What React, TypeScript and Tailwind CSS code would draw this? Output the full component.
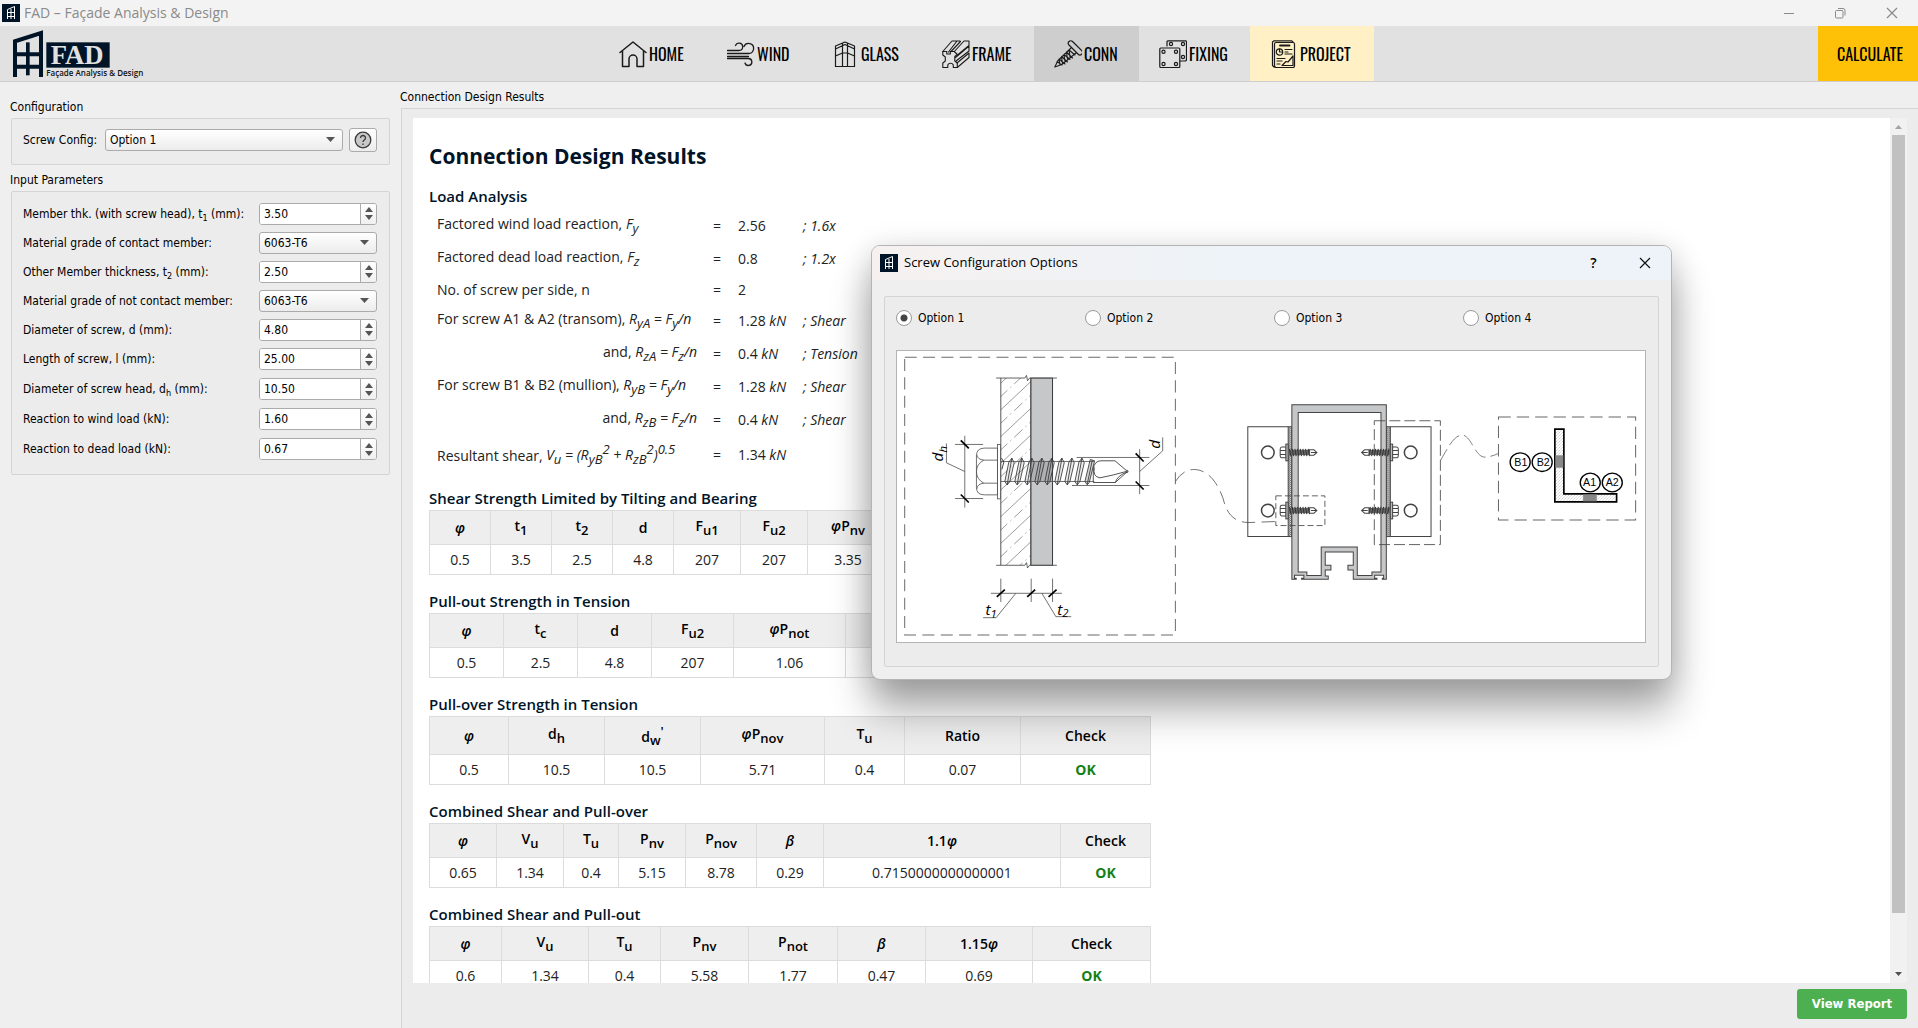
import { useState, type ReactNode } from 'react';
import clsx from 'clsx';

const OPTIONS = ['Option 1', 'Option 2', 'Option 3', 'Option 4'];

type Field = { id: string; label: ReactNode; value: string; kind: 'spin' | 'select' };

const FIELDS: Field[] = [
  { id: 't1', label: <>Member thk. (with screw head), t<Small>1</Small> (mm):</>, value: '3.50', kind: 'spin' },
  { id: 'grade1', label: 'Material grade of contact member:', value: '6063-T6', kind: 'select' },
  { id: 't2', label: <>Other Member thickness, t<Small>2</Small> (mm):</>, value: '2.50', kind: 'spin' },
  { id: 'grade2', label: 'Material grade of not contact member:', value: '6063-T6', kind: 'select' },
  { id: 'd', label: 'Diameter of screw, d (mm):', value: '4.80', kind: 'spin' },
  { id: 'l', label: 'Length of screw, l (mm):', value: '25.00', kind: 'spin' },
  { id: 'dh', label: <>Diameter of screw head, d<Small>h</Small> (mm):</>, value: '10.50', kind: 'spin' },
  { id: 'wind', label: 'Reaction to wind load (kN):', value: '1.60', kind: 'spin' },
  { id: 'dead', label: 'Reaction to dead load (kN):', value: '0.67', kind: 'spin' },
];

function Small({ children }: { children: ReactNode }) {
  return <sub className="static align-sub text-[9px]">{children}</sub>;
}

function Sub({ children }: { children: ReactNode }) {
  return <sub className="static align-sub text-[13px] leading-5">{children}</sub>;
}

function Sup({ children }: { children: ReactNode }) {
  return <sup className="static align-super text-[13px] leading-5">{children}</sup>;
}

function AppIcon() {
  return (
    <svg width="18" height="18" viewBox="0 0 18 18" aria-hidden="true">
      <rect width="18" height="18" fill="#001428" />
      <path d="M5.500 15V5.500l7-3V15M5.500 8.500h7M5.500 12.500h7M9 5v10" fill="none" stroke="#fff" strokeWidth="1" />
    </svg>
  );
}

function Logo() {
  return (
    <svg width="145" height="55" viewBox="0 78 435 165" role="img" aria-label="FAD Façade Analysis & Design">
      <path d="M45 231V124L123 99V231M45 163H123M45 200H123" fill="none" stroke="#001428" strokeWidth="12" />
      <path d="M78 127H89V226H78Z" fill="#001428" />
      <rect x="139" y="127" width="190" height="76" fill="#001428" />
      <text x="152" y="192" fontSize="80" fontWeight="700" fill="#e1e1e1" className="font-['Liberation_Serif',serif]">FAD</text>
      <text x="139" y="227" fontSize="24" fontWeight="600" fill="#111" className="font-['Open_Sans',sans-serif]">Façade Analysis &amp; Design</text>
    </svg>
  );
}

/* ---------- toolbar icons ---------- */

function NavIcon({ children }: { children: ReactNode }) {
  return (
    <svg width="28" height="28" viewBox="0 0 28 28" fill="none" stroke="#1a1a1a" strokeWidth="1.200" strokeLinejoin="round" strokeLinecap="round" aria-hidden="true" className="shrink-0">
      {children}
    </svg>
  );
}

const HomeIcon = () => (
  <NavIcon>
    <path strokeWidth="1.500" d="M1 12.500L14 2l13 10.500M3.500 11v15.500H10V19a4 4 0 018 0v7.500h6.500V11" />
  </NavIcon>
);

const WindIcon = () => (
  <NavIcon>
    <path strokeWidth="1.300" d="M.500 10.500h11.500a3.700 3.700 0 10-3.500-5M.500 13.500h21a5 5 0 10-4.500-7M.500 16.500h21M.500 18.500h21a3.500 3.500 0 11-3.500 4.500" />
  </NavIcon>
);

const GlassIcon = () => (
  <NavIcon>
    <path d="M4.500 6L14 2l9.500 4v20.500h-19zM11.500 3v23.500M16.500 3v23.500M4.500 9L14 4.500 23.500 9M4.500 16l7-3h5l7 3" />
  </NavIcon>
);

const FrameIcon = () => (
  <NavIcon>
    <path strokeWidth="1.100" d="M.800 11.500h4v2.500h3.500v-2.500h4l3 3-2.500 2v4.500l2.500 2v4.500h-4v-2.500a3 3 0 00-5.500 0v2.500h-5v-4.500l2.500-2v-4l-2.500-2z" />
    <path strokeWidth="1.100" d="M.800 11.500L10 1h5l-8.500 11M18 1h-3M12.300 11.500L22 1h5v4.500L15.500 15M8.500 12L18.500 1.500M13.500 17.500L27 6v5l-13 10M15 23l12-10v4.500L15.300 27.500" />
  </NavIcon>
);

const ScrewIcon = () => (
  <NavIcon>
    <rect x="12.500" y="5" width="18" height="5" rx="2.500" transform="rotate(45 21 7.500)" />
    <path strokeWidth="1.100" d="M17 8L4 20.500.800 27l7-2.500L22 13M15 10l6 5M12.500 12l6 6M10 14.500l6 5M7.500 16.500l6 5.500M5 19l6 5M3 21.500l5 3.500M15 10l1 7M12.500 12l1 7M10 14.500l1 7M7.500 17l1 6.500M5 19l1 6" />
  </NavIcon>
);

const FixingIcon = () => (
  <NavIcon>
    <path d="M8 6V1.500L9 .800h18l.500 1V20l-1 1H21" />
    <rect x=".800" y="8" width="20" height="19.500" rx="1" />
    <g>
      <circle cx="4.500" cy="11.800" r="1.600" /><circle cx="17" cy="11.800" r="1.600" />
      <circle cx="4.500" cy="24" r="1.600" /><circle cx="17" cy="24" r="1.600" />
      <circle cx="12" cy="4" r="1.600" /><circle cx="24" cy="4" r="1.600" /><circle cx="24" cy="17" r="1.600" />
    </g>
  </NavIcon>
);

const ProjectIcon = () => (
  <NavIcon>
    <path d="M5.500 27H4L2.500 25.500V2L4 .800h17.500L23 2" />
    <rect x="4.500" y="2.500" width="20" height="25" rx="1.500" />
    <path strokeWidth="1.800" d="M10 5.500h9.500" />
    <circle cx="9.500" cy="12" r="3.200" />
    <path d="M9.500 9v3h3M15 9.500h7M15 12h3M15 14h7M7 18.500h8M7 21h5M7 24h3M12 25.500l4-4 2 .500 5-6v9.500z" />
  </NavIcon>
);

const NAV = [
  { name: 'HOME', icon: HomeIcon, style: 'w-[108px]' },
  { name: 'WIND', icon: WindIcon, style: 'w-[104px]' },
  { name: 'GLASS', icon: GlassIcon, style: 'w-[111px]' },
  { name: 'FRAME', icon: FrameIcon, style: 'w-[112px]' },
  { name: 'CONN', icon: ScrewIcon, style: 'w-[105px] bg-[#cecece]' },
  { name: 'FIXING', icon: FixingIcon, style: 'w-[111px]' },
  { name: 'PROJECT', icon: ProjectIcon, style: 'w-[124px] bg-[#fff0c5]' },
];

const navFont = "font-['Oswald','Roboto_Condensed','Liberation_Sans_Narrow',sans-serif] text-base font-normal text-black";

function TitleBar() {
  return (
    <div className="flex h-[26px] shrink-0 items-center bg-[#f3f3f3] pl-0.5">
      <AppIcon />
      <span className="ml-1 font-['Open_Sans',sans-serif] text-sm text-[#8a8a8a]">FAD – Façade Analysis &amp; Design</span>
      <div className="ml-auto flex items-center">
        <button aria-label="Minimize" className="flex h-6 w-[51px] items-center justify-center">
          <svg width="12" height="12" viewBox="0 0 12 12" stroke="#8a8a8a"><path d="M1 6.500h10" /></svg>
        </button>
        <button aria-label="Restore" className="flex h-6 w-[51px] items-center justify-center">
          <svg width="12" height="12" viewBox="0 0 12 12" fill="none" stroke="#8a8a8a"><rect x="1.500" y="3.500" width="7.500" height="7.500" rx="1" /><path d="M4 1.500h5q2 0 2 2v5" /></svg>
        </button>
        <button aria-label="Close" className="flex h-6 w-[53px] items-center justify-center">
          <svg width="12" height="12" viewBox="0 0 12 12" stroke="#8a8a8a" strokeWidth="1.200"><path d="M1 1l10 10M11 1L1 11" /></svg>
        </button>
      </div>
    </div>
  );
}

function Toolbar() {
  return (
    <header className="flex h-14 shrink-0 border-b border-[#cdcdcd] bg-[#e1e1e1]">
      <div className="w-[155px] shrink-0"><Logo /></div>
      <nav className="flex flex-1 justify-center">
        {NAV.map(({ name, icon: Icon, style }) => (
          <button key={name} className={clsx('flex items-center gap-0.5 pl-5', navFont, style)}>
            <Icon />
            {name}
          </button>
        ))}
      </nav>
      <button className={clsx('w-[100px] bg-[#ffc107] pl-1', navFont)}>CALCULATE</button>
    </header>
  );
}

/* ---------- sidebar ---------- */

const controlBorder = 'rounded-[3px] border border-[#ababab]';

function SelectBox({ id, options, value, onChange }: { id: string; options: string[]; value: string; onChange?: (v: string) => void }) {
  return (
    <div className="relative w-full">
      <select
        id={id}
        value={value}
        onChange={(e) => onChange?.(e.target.value)}
        className={clsx('block h-[22px] w-full appearance-none bg-linear-to-b from-white to-[#ececec] pl-1', controlBorder)}
      >
        {options.map((o) => <option key={o}>{o}</option>)}
      </select>
      <svg width="9" height="6" viewBox="0 0 9 6" className="pointer-events-none absolute top-2 right-2" aria-hidden="true">
        <path d="M0 0h9L4.500 5z" fill="#555" />
      </svg>
    </div>
  );
}

function SpinBox({ id, initial }: { id: string; initial: string }) {
  const [value, setValue] = useState(initial);
  const step = (by: number) => setValue((Number(value) + by).toFixed(2));
  return (
    <div className={clsx('flex h-[22px] w-full overflow-hidden bg-white', controlBorder)}>
      <input id={id} value={value} onChange={(e) => setValue(e.target.value)} className="min-w-0 flex-1 bg-white pl-1 outline-none" />
      <div className="flex w-4 flex-col border-l border-[#ababab] bg-linear-to-b from-white to-[#f0f0f0]">
        <button aria-label="Increase" onClick={() => step(0.1)} className="flex flex-1 items-end justify-center pb-px">
          <svg width="8" height="5" viewBox="0 0 8 5"><path d="M0 5h8L4 0z" fill="#555" /></svg>
        </button>
        <button aria-label="Decrease" onClick={() => step(-0.1)} className="flex flex-1 items-start justify-center pt-0.5">
          <svg width="8" height="5" viewBox="0 0 8 5"><path d="M0 0h8L4 5z" fill="#555" /></svg>
        </button>
      </div>
    </div>
  );
}

function Sidebar({ option, setOption }: { option: string; setOption: (v: string) => void }) {
  return (
    <aside className="w-[400px] shrink-0 pt-[15px] pr-[10px] pl-[11px]">
      <h2 className="-ml-px h-[21px] leading-5">Configuration</h2>
      <div className="flex h-[47px] items-start rounded-[2px] border border-[#d4d4d4] bg-[#ececec] pt-[9px] pr-3 pl-[11px]">
        <label htmlFor="config" className="w-[82px] leading-6">Screw Config:</label>
        <div className="flex-1 pt-px"><SelectBox id="config" options={OPTIONS} value={option} onChange={setOption} /></div>
        <button aria-label="Help" className={clsx('ml-1.5 flex h-6 w-7 items-center justify-center bg-linear-to-b from-white to-[#ececec]', controlBorder)}>
          <svg width="18" height="18" viewBox="0 0 18 18" fill="none" stroke="#3a3a3a" strokeWidth="1.300">
            <circle cx="9" cy="9" r="7.800" fill="#c8c8c8" />
            <path d="M6.500 7a2.500 2.500 0 115 0c0 1.800-2.500 2-2.500 4M9 12.500v1.500" />
          </svg>
        </button>
      </div>
      <h2 className="-ml-px mt-1 h-[22px] leading-[22px]">Input Parameters</h2>
      <div className="rounded-[2px] border border-[#d4d4d4] bg-[#ececec] pt-[7px] pr-3 pb-[10px] pl-[11px]">
        {FIELDS.map((f, i) => (
          <div key={f.id} className={clsx('flex items-center', i < 5 ? 'h-[29px]' : 'h-[30px]')}>
            <label htmlFor={f.id} className="w-[236px] shrink-0 whitespace-nowrap">{f.label}</label>
            {f.kind === 'spin' ? <SpinBox id={f.id} initial={f.value} /> : <SelectBox id={f.id} options={[f.value]} value={f.value} />}
          </div>
        ))}
      </div>
    </aside>
  );
}

/* ---------- results ---------- */

type Load = { label: ReactNode; value: string; unit?: boolean; note?: string; right?: boolean; height: string };

const LOADS: Load[] = [
  { label: <>Factored wind load reaction, <i>F<Sub>y</Sub></i></>, value: '2.56', note: '; 1.6x', height: 'h-[33px]' },
  { label: <>Factored dead load reaction, <i>F<Sub>z</Sub></i></>, value: '0.8', note: '; 1.2x', height: 'h-[33px]' },
  { label: 'No. of screw per side, n', value: '2', height: 'h-[29px]' },
  { label: <>For screw A1 &amp; A2 (transom), <i>R<Sub>yA</Sub> = F<Sub>y</Sub>/n</i></>, value: '1.28', unit: true, note: '; Shear', height: 'h-[33px]' },
  { label: <>and, <i>R<Sub>zA</Sub> = F<Sub>z</Sub>/n</i></>, value: '0.4', unit: true, note: '; Tension', right: true, height: 'h-[33px]' },
  { label: <>For screw B1 &amp; B2 (mullion), <i>R<Sub>yB</Sub> = F<Sub>y</Sub>/n</i></>, value: '1.28', unit: true, note: '; Shear', height: 'h-[33px]' },
  { label: <>and, <i>R<Sub>zB</Sub> = F<Sub>z</Sub>/n</i></>, value: '0.4', unit: true, note: '; Shear', right: true, height: 'h-[33px]' },
  { label: <>Resultant shear, <i>V<Sub>u</Sub> = (R<Sub>yB</Sub><Sup>2</Sup> + R<Sub>zB</Sub><Sup>2</Sup>)<Sup>0.5</Sup></i></>, value: '1.34', unit: true, height: 'h-[37px]' },
];

const phi = <i>φ</i>;
const beta = <i>β</i>;

type Check = { title: string; widths: number[]; head: ReactNode[]; cells: string[]; tall?: boolean };

const CHECKS: Check[] = [
  {
    title: 'Shear Strength Limited by Tilting and Bearing',
    widths: [61, 61, 61, 61, 67, 67, 81, 74, 80, 108],
    head: [phi, <>t<Sub>1</Sub></>, <>t<Sub>2</Sub></>, 'd', <>F<Sub>u1</Sub></>, <>F<Sub>u2</Sub></>, <>{phi}P<Sub>nv</Sub></>, <>V<Sub>u</Sub></>, 'Ratio', 'Check'],
    cells: ['0.5', '3.5', '2.5', '4.8', '207', '207', '3.35', '1.34', '0.4', 'OK'],
  },
  {
    title: 'Pull-out Strength in Tension',
    widths: [74, 74, 74, 82, 112, 80, 100, 125],
    head: [phi, <>t<Sub>c</Sub></>, 'd', <>F<Sub>u2</Sub></>, <>{phi}P<Sub>not</Sub></>, <>T<Sub>u</Sub></>, 'Ratio', 'Check'],
    cells: ['0.5', '2.5', '4.8', '207', '1.06', '0.4', '0.38', 'OK'],
  },
  {
    title: 'Pull-over Strength in Tension',
    widths: [79, 96, 96, 124, 80, 116, 130],
    head: [phi, <>d<Sub>h</Sub></>, <>d<Sub>w</Sub><Sup>'</Sup></>, <>{phi}P<Sub>nov</Sub></>, <>T<Sub>u</Sub></>, 'Ratio', 'Check'],
    cells: ['0.5', '10.5', '10.5', '5.71', '0.4', '0.07', 'OK'],
    tall: true,
  },
  {
    title: 'Combined Shear and Pull-over',
    widths: [67, 67, 55, 67, 71, 67, 237, 90],
    head: [phi, <>V<Sub>u</Sub></>, <>T<Sub>u</Sub></>, <>P<Sub>nv</Sub></>, <>P<Sub>nov</Sub></>, beta, <>1.1{phi}</>, 'Check'],
    cells: ['0.65', '1.34', '0.4', '5.15', '8.78', '0.29', '0.7150000000000001', 'OK'],
  },
  {
    title: 'Combined Shear and Pull-out',
    widths: [72, 87, 72, 88, 89, 88, 107, 118],
    head: [phi, <>V<Sub>u</Sub></>, <>T<Sub>u</Sub></>, <>P<Sub>nv</Sub></>, <>P<Sub>not</Sub></>, beta, <>1.15{phi}</>, 'Check'],
    cells: ['0.6', '1.34', '0.4', '5.58', '1.77', '0.47', '0.69', 'OK'],
  },
];

function CheckTable({ check }: { check: Check }) {
  return (
    <section className="mb-[14px]">
      <h3 className="h-6 text-[15px] leading-6 font-semibold text-[#001428]">{check.title}</h3>
      <table className="w-[722px] table-fixed border-collapse text-center">
        <colgroup>
          {check.widths.map((w, i) => <col key={i} style={{ width: w }} />)}
        </colgroup>
        <thead>
          <tr className={check.tall ? 'h-[38px]' : 'h-[34px]'}>
            {check.head.map((h, i) => (
              <th key={i} className="border border-[#dcdcdc] bg-[#eeeeee] p-0 leading-5 font-semibold text-black">{h}</th>
            ))}
          </tr>
        </thead>
        <tbody>
          <tr className="h-[30px]">
            {check.cells.map((c, i) => (
              <td key={i} className={clsx('border border-[#dcdcdc] p-0 leading-5', c === 'OK' && 'font-bold text-[#148014]')}>{c}</td>
            ))}
          </tr>
        </tbody>
      </table>
    </section>
  );
}

function Results() {
  return (
    <main className="flex min-w-0 flex-1 flex-col">
      <h2 className="h-[26px] leading-[30px]">Connection Design Results</h2>
      <div className="ml-px flex min-h-0 flex-1 flex-col border-t border-l border-[#d4d4d4] bg-[#ececec] pt-[9px] pr-[11px] pl-[11px]">
        <div className="flex min-h-0 flex-1">
          <div className="min-w-0 flex-1 overflow-hidden bg-white pt-[22px] pl-4 font-['Open_Sans',sans-serif] text-sm text-[#222]">
            <h1 className="h-8 text-[21px] leading-8 font-bold text-[#001428]">Connection Design Results</h1>
            <h3 className="mt-[11px] h-[26px] text-[15px] leading-[26px] font-semibold text-[#001428]">Load Analysis</h3>
            <table className="border-collapse">
              <tbody>
                {LOADS.map((r, i) => (
                  <tr key={i} className={r.height}>
                    <td className={clsx('w-[276px] p-0 pl-2 leading-5 whitespace-nowrap', r.right && 'pr-2 text-right')}>{r.label}</td>
                    <td className="w-[33px] p-0 pl-2 leading-5">=</td>
                    <td className="w-[65px] p-0 leading-5 whitespace-nowrap">{r.value}{r.unit && <i> kN</i>}</td>
                    <td className="p-0 leading-5 italic">{r.note}</td>
                  </tr>
                ))}
              </tbody>
            </table>
            <div className="mt-[13px]">
              {CHECKS.map((c) => <CheckTable key={c.title} check={c} />)}
            </div>
          </div>
          <div className="flex w-[17px] shrink-0 flex-col items-center bg-[#f1f1f1]" aria-hidden="true">
            <svg width="17" height="17" viewBox="0 0 17 17"><path d="M5 11h7L8.500 7z" fill="#a3a3a3" /></svg>
            <div className="h-[778px] w-[13px] bg-[#c1c1c1]" />
            <svg width="17" height="17" viewBox="0 0 17 17" className="mt-auto"><path d="M5 6h7L8.500 10z" fill="#505050" /></svg>
          </div>
        </div>
        <div className="flex h-[45px] shrink-0 items-start justify-end pt-1.5">
          <button className="h-[30px] w-[110px] rounded-[3px] bg-[#4caf50] font-['DejaVu_Sans_Condensed','Open_Sans',sans-serif] text-[13px] font-bold text-white">View Report</button>
        </div>
      </div>
    </main>
  );
}

/* ---------- screw configuration drawing ---------- */

const THREADS = [455, 485, 515, 545, 575, 605, 635, 665];

function SmallScrew({ y, flip }: { y: number; flip?: boolean }) {
  return (
    <g transform={flip ? `translate(658 ${y}) scale(-1 1)` : `translate(0 ${y})`}>
      <path d="M170-16H156Q152-15 152-10V10Q152 15 156 16H170ZM152-6H170M152 6H170" fill="#fff" />
      <rect x="169" y="-25" width="7" height="50" fill="#bbb" />
      <rect x="176" y="-8" width="64" height="16" fill="#666" stroke="none" />
      {[180, 188, 196, 204, 212, 220, 228, 236].map((x) => <path key={x} d={`M${x}-11L${x + 4} 11`} strokeWidth="3" stroke="#333" />)}
      <path d="M240-8H253L262 0L253 8H240ZM244 0H262" fill="#fff" strokeWidth="3" />
    </g>
  );
}

function Tick({ x, y, up }: { x: number; y: number; up?: boolean }) {
  return <path d={up ? `M${x - 12} ${y + 11}L${x + 12} ${y - 11}` : `M${x - 12} ${y - 12}L${x + 12} ${y + 12}`} stroke="#000" strokeWidth="5" />;
}

function ScrewDrawing() {
  return (
    <svg viewBox="1 1 747 291" className="block w-full" role="img" aria-label="Screw configuration" fontFamily="Open Sans, sans-serif">
      <defs>
        <clipPath id="wall"><rect x="425" y="432" width="90" height="561" /></clipPath>
        <pattern id="hatch" width="9" height="9" patternUnits="userSpaceOnUse">
          <path d="M0 9L9 0" stroke="#b5b5b5" strokeWidth="1.500" />
        </pattern>
        <pattern id="gasket" width="6" height="6" patternUnits="userSpaceOnUse">
          <rect width="6" height="6" fill="#ddd" />
          <path d="M0 0L6 6" stroke="#222" strokeWidth="2" />
        </pattern>
      </defs>

      {/* screw section */}
      <g transform="translate(-37 -116) scale(.33333)" fill="none" stroke="#555" strokeWidth="2.500">
        <rect x="137" y="370" width="811" height="832" strokeDasharray="36 19" strokeWidth="3" stroke="#6b6b6b" />
        <g clipPath="url(#wall)" stroke="#888" strokeWidth="2.500">
          {Array.from({ length: 17 }, (_, i) => (
            <path key={i} d={`M420 ${452 + i * 40}L520 ${358 + i * 40}`} strokeDasharray={i % 2 ? '34 12 4 12' : undefined} />
          ))}
        </g>
        <rect x="515" y="432" width="65" height="561" fill="#c6c7c9" />
        <rect x="515" y="682" width="65" height="60" fill="#b0b1b3" stroke="none" />
        <path d="M425 432V993M515 432V993M580 432V993" stroke="#333" />
        <path d="M411 432H497L502 424L505 440L511 432H593M411 993H497L502 985L505 1001L511 993H593" stroke="#444" />
        <rect x="415" y="631" width="9" height="163" fill="#fff" />
        <path d="M415 642H376Q352 642 352 665V760Q352 782 376 782H415ZM415 678H374M415 747H374M353 662Q355 676 374 678Q352 690 352 712Q352 735 374 747Q355 749 353 764" />
        <path d="M425 682H705M425 742H705" />
        <path d="M427 672L434 684L428 706" stroke="#222" />
        {THREADS.map((x) => (
          <g key={x} stroke="#333">
            <path d={`M${x + 3} 672L${x + 10} 686L${x - 3} 742L${x - 11} 752L${x - 18} 742L${x - 6} 684Z`} fill="#888" fillOpacity=".15" />
            <path d={`M${x + 3} 672L${x - 11} 752`} />
          </g>
        ))}
        <path d="M693 676L677 742L684 752L690 745L706 680ZM699 678L684 750" stroke="#333" fill="#777" fillOpacity=".3" />
        <path d="M702 745V704Q706 680 725 680H767L800 708L806 710V714L800 716L768 745ZM705 700Q700 728 722 731Q760 724 804 711M768 745Q774 724 804 713" stroke="#333" />

        <path d="M317 605V820M288 631H372M288 793H372M317 712L262 686V628" />
        <Tick x={317} y={631} /><Tick x={317} y={793} />
        <path d="M841 645V780M652 670H870M638 754H870M841 712L910 650V610" />
        <Tick x={841} y={670} /><Tick x={841} y={754} />
        <path d="M425 1033V1103M516 1033V1103M580 1033V1103M395 1077H608M470 1077L411 1150H372M548 1077L590 1147H636" />
        <Tick x={425} y={1077} up /><Tick x={516} y={1077} up /><Tick x={580} y={1077} up />
        <g fill="#000" stroke="none" fontStyle="italic" fontWeight="500" fontSize="46">
          <text transform="translate(252 682) rotate(-90)">d<tspan fontSize="34" dy="12">h</tspan></text>
          <text transform="translate(901 644) rotate(-90)">d</text>
          <text x="379" y="1143">t<tspan fontSize="34" dy="8">1</tspan></text>
          <text x="594" y="1141">t<tspan fontSize="34" dy="8">2</tspan></text>
        </g>
        <path d="M948 742Q970 706 1005 706C1050 708 1075 750 1090 790C1100 830 1115 862 1165 865L1248 862" strokeDasharray="40 19" />
      </g>

      {/* mullion section */}
      <g transform="translate(333 29) scale(.33333)" fill="none" stroke="#444" strokeWidth="3">
        <path d="M176 143H55V472H176M482 143H604V472H482" />
        <rect x="176" y="143" width="11" height="329" fill="url(#gasket)" />
        <rect x="470" y="143" width="12" height="329" fill="url(#gasket)" />
        <path
          fill="#c6c7c9"
          fillRule="evenodd"
          d="M187 77H470V600H458V597H462V588H435V597H442V600H371V572H355V558H371V518H287V558H304V572H287V590H296V600H216V597H223V588H195V597H200V600H187ZM206 100V578H232V589H275V503H383V589H427V578H454V100Z"
        />
        <g strokeWidth="4.500">
          <circle cx="115" cy="220" r="19" /><circle cx="115" cy="394" r="19" />
          <circle cx="543" cy="220" r="19" /><circle cx="543" cy="394" r="19" />
        </g>
        <SmallScrew y={220} /><SmallScrew y={394} />
        <SmallScrew y={220} flip /><SmallScrew y={394} flip />
        <rect x="139" y="350" width="147" height="89" strokeDasharray="18 9" strokeWidth="2.500" />
        <rect x="434" y="125" width="198" height="371" strokeDasharray="33 12" strokeWidth="2.500" />
      </g>

      {/* cleat detail */}
      <g transform="translate(543 -116) scale(.33333)" fill="none" stroke="#666" strokeWidth="3">
        <path d="M2 680C30 630 45 603 68 603C95 605 105 668 135 669Q155 668 176 658" strokeDasharray="40 15" strokeWidth="2.500" />
        <rect x="176" y="549" width="411" height="308" strokeDasharray="37 18" />
        <path d="M345 585H372V779H530V803H345Z" fill="url(#hatch)" stroke="#000" strokeWidth="5" />
        <path d="M347 664H370V700H347ZM430 781H470V801H430Z" fill="#888" stroke="#777" strokeWidth="1" />
        <g stroke="#000" strokeWidth="4">
          <ellipse cx="241" cy="684" rx="30" ry="28" /><ellipse cx="307" cy="684" rx="30" ry="28" />
          <ellipse cx="451" cy="745" rx="30" ry="28" /><ellipse cx="517" cy="745" rx="30" ry="28" />
        </g>
        <g fill="#000" stroke="none" fontSize="32" textAnchor="middle" fontFamily="Liberation Sans, sans-serif">
          <text x="243" y="695">B1</text><text x="310" y="695">B2</text>
          <text x="449" y="756">A1</text><text x="517" y="756">A2</text>
        </g>
      </g>
    </svg>
  );
}

function ScrewDialog({ option, setOption }: { option: string; setOption: (v: string) => void }) {
  return (
    <div role="dialog" aria-label="Screw Configuration Options" className="absolute top-[245px] left-[871px] w-[801px] overflow-hidden rounded-[9px] border border-[#b4b4b4] bg-[#efefef] shadow-[0_30px_40px_rgba(0,0,0,0.33),0_4px_30px_rgba(0,0,0,0.15)]">
      <div className="flex h-[34px] items-center bg-linear-to-r from-[#f6f1f0] to-[#edf3f8] to-45% pl-2">
        <AppIcon />
        <span className="ml-1.5 font-['Open_Sans',sans-serif] text-[13px] text-black">Screw Configuration Options</span>
        <button aria-label="Help" className="ml-auto flex h-8 w-[51px] items-center justify-center font-['Open_Sans',sans-serif] text-sm font-semibold text-black">?</button>
        <button aria-label="Close" className="flex h-8 w-[52px] items-center justify-center">
          <svg width="12" height="12" viewBox="0 0 12 12" stroke="#111" strokeWidth="1.200"><path d="M1 1l10 10M11 1L1 11" /></svg>
        </button>
      </div>
      <div className="mx-3 mt-4 mb-3 rounded-[2px] border border-[#d4d4d4] bg-[#ececec] pt-[13px] pr-3 pb-[23px] pl-[11px]">
        <div className="grid grid-cols-[repeat(4,189px)]">
          {OPTIONS.map((o) => (
            <label key={o} className="flex items-center gap-1.5">
              <input
                type="radio"
                name="screw-option"
                checked={option === o}
                onChange={() => setOption(o)}
                className="size-4 appearance-none rounded-full border border-[#9a9a9a] bg-white checked:bg-[radial-gradient(circle,#444_0,#444_3px,#fff_4px)]"
              />
              {o}
            </label>
          ))}
        </div>
        <div className="mt-6 border border-[#b4b4b4] bg-white">
          <ScrewDrawing />
        </div>
      </div>
    </div>
  );
}

export default function App() {
  const [option, setOption] = useState('Option 1');

  return (
    <div className="relative flex h-screen flex-col overflow-hidden bg-[#efefef] font-['DejaVu_Sans_Condensed','DejaVu_Sans',sans-serif] text-xs text-black">
      <TitleBar />
      <Toolbar />
      <div className="flex min-h-0 flex-1">
        <Sidebar option={option} setOption={setOption} />
        <Results />
      </div>
      <ScrewDialog option={option} setOption={setOption} />
    </div>
  );
}
